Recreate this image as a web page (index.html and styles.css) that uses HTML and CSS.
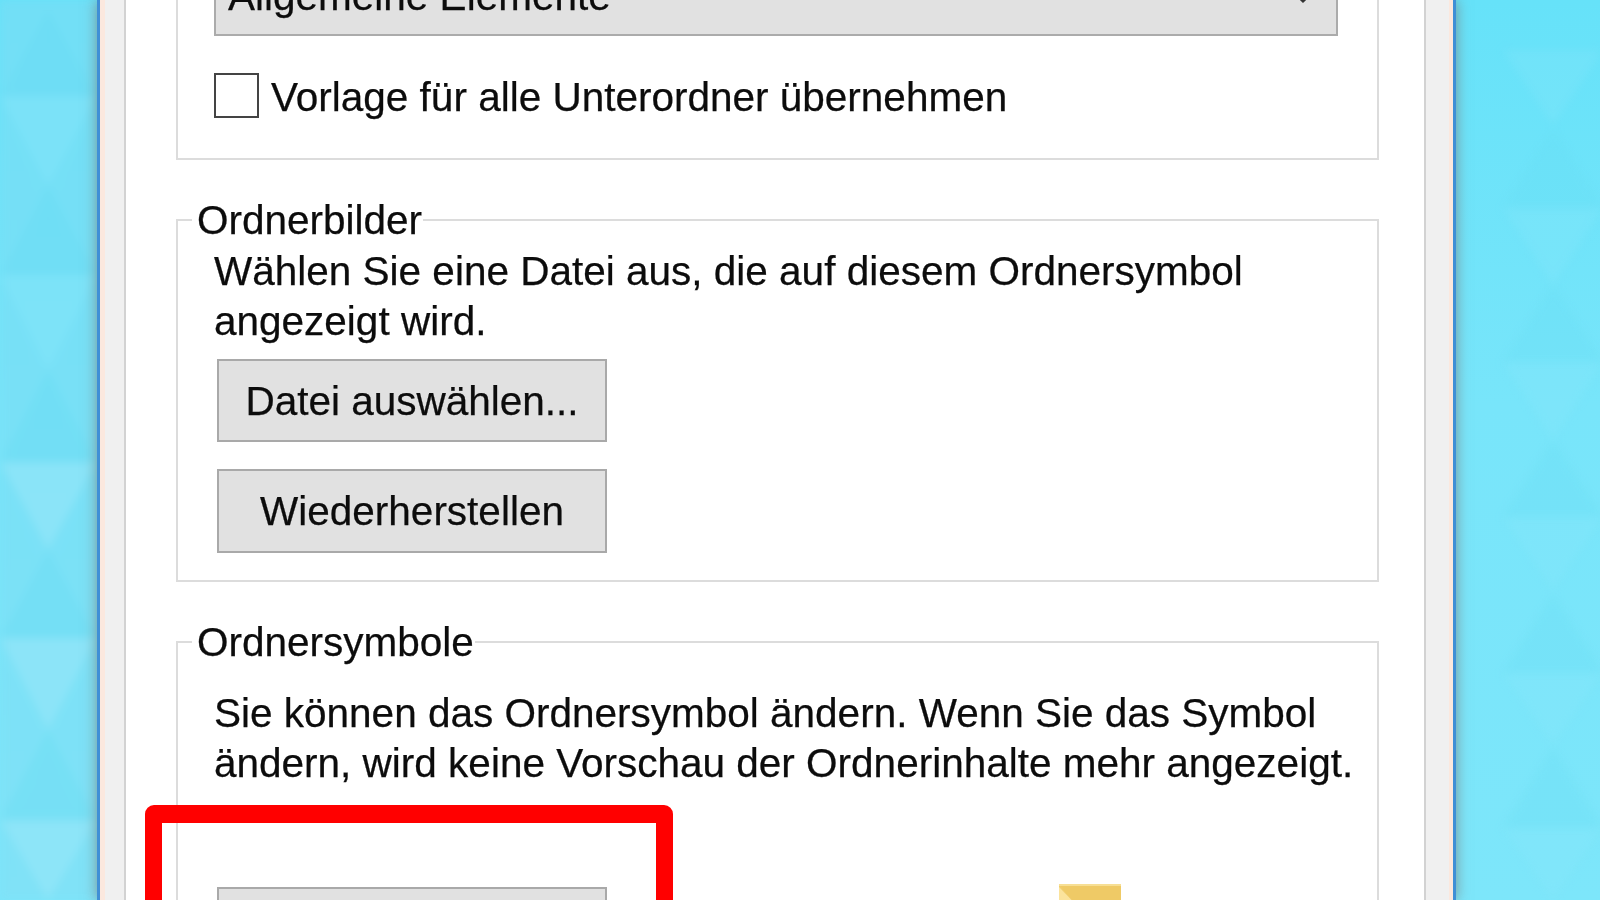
FILE: index.html
```html
<!DOCTYPE html>
<html lang="de">
<head>
<meta charset="utf-8">
<title>Ordner anpassen</title>
<link rel="stylesheet" href="styles.css">
</head>
<body>
<div class="desktop">
  <svg class="wall wall-left" width="97" height="900" viewBox="0 0 97 900" aria-hidden="true">
    <polygon class="tri-a" points="48,10 97,96 0,96"/>
    <polygon class="tri-b" points="0,96 97,96 48,185"/>
    <polygon class="tri-a" points="48,185 97,275 0,275"/>
    <polygon class="tri-b" points="0,275 97,275 48,370"/>
    <polygon class="tri-a" points="48,370 97,462 0,462"/>
    <polygon class="tri-c" points="0,462 97,462 48,550"/>
    <polygon class="tri-a" points="48,550 97,638 0,638"/>
    <polygon class="tri-c" points="0,638 97,638 48,730"/>
    <polygon class="tri-a" points="48,730 97,820 0,820"/>
    <polygon class="tri-c" points="0,820 97,820 48,900"/>
  </svg>
  <main class="window">
    <div class="sheet">
      <fieldset class="group group-first">
        <div class="select">
          <span class="txt">Allgemeine Elemente</span>
          <svg class="chevron" width="30" height="30" viewBox="0 0 30 30" aria-hidden="true"><path d="M5 12 15 22 25 12" fill="none" stroke="#333" stroke-width="3"/></svg>
        </div>
        <label class="check"><span class="box"></span><span class="txt">Vorlage für alle Unterordner übernehmen</span></label>
      </fieldset>
      <fieldset class="group group-images">
        <legend class="txt">Ordnerbilder</legend>
        <p class="txt">Wählen Sie eine Datei aus, die auf diesem Ordnersymbol angezeigt wird.</p>
        <div class="btn btn-one txt">Datei auswählen...</div>
        <div class="btn btn-two txt">Wiederherstellen</div>
      </fieldset>
      <fieldset class="group group-icons">
        <legend class="txt">Ordnersymbole</legend>
        <p class="txt">Sie können das Ordnersymbol ändern. Wenn Sie das Symbol ändern, wird keine Vorschau der Ordnerinhalte mehr angezeigt.</p>
        <div class="icon-row">
          <div class="btn"></div>
          <svg class="folder" width="62" height="40" viewBox="0 0 62 40" aria-hidden="true">
            <rect width="62" height="40" fill="#f0cd6c"/>
            <polygon points="0,0 62,0 62,40 30,40" fill="#efca66"/>
            <polygon points="0,3 0,40 36,40" fill="#fbe39c"/>
            <rect width="62" height="2" fill="#f7df94"/>
          </svg>
        </div>
      </fieldset>
      <div class="highlight"></div>
    </div>
  </main>
  <svg class="wall wall-right" width="144" height="900" viewBox="0 0 144 900" aria-hidden="true">
    <polygon class="tri-b" points="47,50 147,50 97,125"/>
    <polygon class="tri-a" points="97,130 147,208 47,208"/>
    <polygon class="tri-b" points="47,208 147,208 97,285"/>
    <polygon class="tri-a" points="97,285 147,362 47,362"/>
    <polygon class="tri-b" points="47,362 147,362 97,440"/>
    <polygon class="tri-a" points="97,440 147,517 47,517"/>
    <polygon class="tri-b" points="47,517 147,517 97,590"/>
    <polygon class="tri-a" points="97,595 147,673 47,673"/>
    <polygon class="tri-b" points="47,673 147,673 97,745"/>
    <polygon class="tri-a" points="97,748 147,828 47,828"/>
    <polygon class="tri-b" points="47,828 147,828 97,900"/>
  </svg>
</div>
</body>
</html>
```
FILE: styles.css
```css
* { box-sizing: border-box; }
html, body { margin: 0; height: 100%; overflow: hidden; }
body { font-family: "Liberation Sans", Arial, sans-serif; color: #0c0c0c; }

.desktop {
  display: flex;
  width: 1600px;
  height: 900px;
  overflow: hidden;
  background: linear-gradient(180deg, #66e2f9 0%, #78e5fa 45%, #7de6fa 100%);
}

.wall { flex: none; display: block; filter: blur(4px); }
.wall-left { background: linear-gradient(180deg, #72dff6 0%, #80e2f7 100%); }
.wall-right .tri-a { opacity: .22; }
.wall-right .tri-b { opacity: .25; }
.tri-a { fill: #62d9f1; opacity: .3; }
.tri-b { fill: #8ae8fb; opacity: .35; }
.tri-c { fill: #9ce8fa; opacity: .5; }

.window {
  flex: none;
  width: 1359px;
  height: 900px;
  border-left: 3px solid #3f8fd6;
  border-right: 3px solid #3f8fd6;
  padding: 0 25px 0 25px;
  background: linear-gradient(90deg, #fbe8de 0, #fbe8de 5px, #f0f0f0 5px, #f0f0f0 calc(100% - 4px), #fbe8de calc(100% - 4px));
  box-shadow: 0 0 13px rgba(125, 125, 125, .8);
  z-index: 1;
}

.sheet {
  position: relative;
  width: 1302px;
  height: 900px;
  margin-left: -1px;
  padding: 0 46px 0 50px;
  border-left: 2px solid #d2d2d2;
  border-right: 2px solid #d2d2d2;
  background: #fff;
  overflow: hidden;
}

.txt {
  font-size: 40.5px;
  line-height: 50px;
  filter: blur(.45px);
  -webkit-text-stroke: .25px #0c0c0c;
}

.group {
  display: block;
  min-width: 0;
  width: 1203px;
  margin: 0;
  padding: 0 36px;
  border: 2px solid #dcdcdc;
}

.group legend {
  margin-left: -22px;
  padding: 0 1px 0 5px;
  line-height: 44px;
}

.group p { margin: 0; width: 1150px; }

.group-first {
  height: 259px;
  margin-top: -99px;
  padding-top: 53px;
}

.select {
  display: flex;
  align-items: center;
  justify-content: space-between;
  width: 1124px;
  height: 80px;
  padding: 0 18px 0 12px;
  border: 2px solid #ababab;
  background: #e1e1e1;
}

.chevron { margin-top: -4px; }

.check {
  display: flex;
  align-items: center;
  gap: 12px;
  margin-top: 36px;
}

.box {
  flex: none;
  width: 45px;
  height: 45px;
  margin-top: -4px;
  border: 2px solid #444;
  background: #fff;
}

.group-images {
  height: 384px;
  margin-top: 38px;
  padding-top: 4px;
}

.btn {
  display: flex;
  align-items: center;
  justify-content: center;
  width: 390px;
  height: 83px;
  margin-left: 3px;
  border: 2px solid #a9a9a9;
  background: #e1e1e1;
  white-space: nowrap;
}

.btn-one { margin-top: 13px; }
.btn-two { margin-top: 27px; height: 84px; }

.group-icons {
  height: 300px;
  margin-top: 38px;
  padding-top: 24px;
}

.icon-row {
  display: flex;
  align-items: flex-start;
  margin-top: 99px;
}

.folder { flex: none; margin: -3px 0 0 452px; filter: blur(.5px); }

.highlight {
  position: absolute;
  left: 19px;
  top: 805px;
  width: 528px;
  height: 140px;
  border: 17px solid #ff0000;
  border-top-width: 18px;
  border-radius: 9px;
}
```
